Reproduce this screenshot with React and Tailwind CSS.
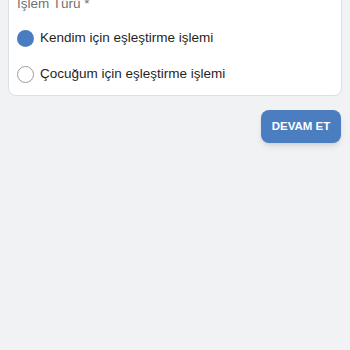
import { useState } from 'react';

const options = [
  { id: 'self', label: 'Kendim için eşleştirme işlemi' },
  { id: 'child', label: 'Çocuğum için eşleştirme işlemi' },
];

export default function App() {
  const [selected, setSelected] = useState('self');

  return (
    <div className="min-h-screen overflow-hidden bg-[#f1f2f3] px-2 font-['Liberation_Sans',Arial,sans-serif]">
      <div className="-mt-[20px] rounded-lg border border-[#dddfe1] bg-white px-2 pt-[13px] pb-[3px]">
        <p className="mb-[6px] text-[13.5px] leading-5 text-[#717171]">İşlem Türü *</p>
        {options.map((opt) => {
          const active = selected === opt.id;
          return (
            <button
              key={opt.id}
              onClick={() => setSelected(opt.id)}
              className="flex h-9 w-full items-center gap-[6px] text-left"
            >
              {active ? (
                <span className="h-[17px] w-[17px] shrink-0 rounded-full bg-[#4a7cc0]" />
              ) : (
                <span className="h-[17px] w-[17px] shrink-0 rounded-full border-[1.5px] border-[#9b9b9b] bg-white" />
              )}
              <span className="text-[13.5px] leading-5 text-[#1f1f1f]">{opt.label}</span>
            </button>
          );
        })}
      </div>

      <div className="mt-[14px] flex justify-end pr-px">
        <button className="h-[33px] w-[80px] rounded-lg bg-[#4b7ec1] text-[11.5px] font-bold text-white shadow-md">
          DEVAM ET
        </button>
      </div>
    </div>
  );
}
